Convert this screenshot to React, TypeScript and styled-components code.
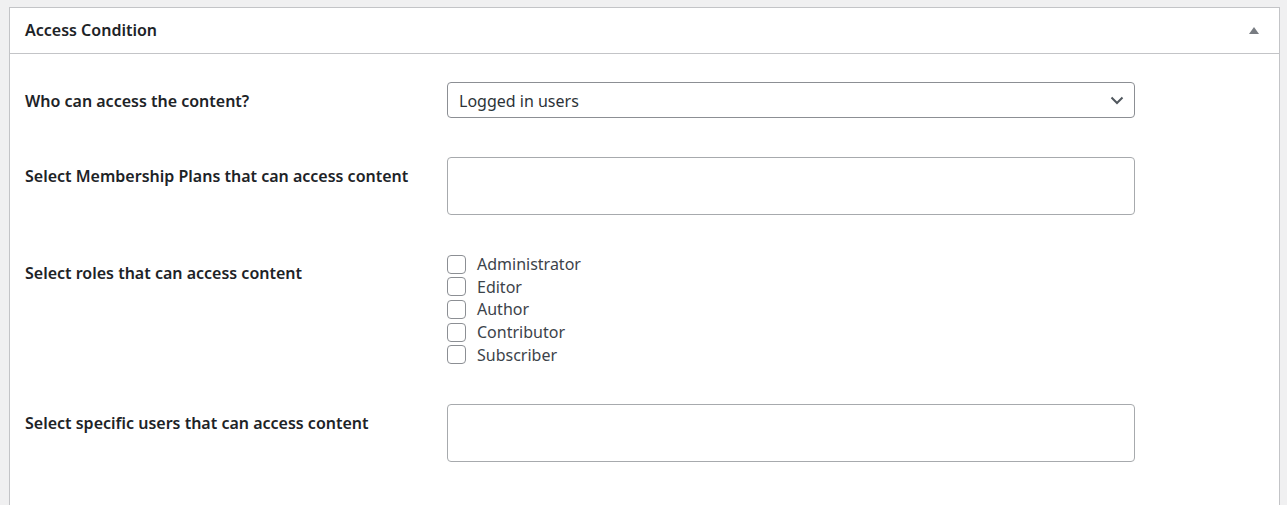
import React from 'react';
import styled, { createGlobalStyle } from 'styled-components';

const GlobalStyle = createGlobalStyle`
  html, body {
    margin: 0;
    padding: 0;
    background: #f0f0f1;
  }
  body {
    padding: 7px 7px 0 9px;
    font-family: "Noto Sans", "Open Sans", sans-serif;
    color: #1d2327;
  }
`;

// Postbox panel
const Panel = styled.div`
  background: #fff;
  border: 1px solid #c3c4c7;
  min-height: 540px;
`;

const Header = styled.div`
  display: flex;
  align-items: center;
  justify-content: space-between;
  height: 45px;
  padding: 0 20px 0 15px;
  border-bottom: 1px solid #c3c4c7;
`;

const Title = styled.h2`
  margin: 0;
  font-size: 16px;
  font-weight: 600;
  line-height: 1.4;
  color: #1d2327;
`;

const Toggle = styled.span`
  width: 0;
  height: 0;
  border-left: 5px solid transparent;
  border-right: 5px solid transparent;
  border-bottom: 7px solid #787c82;
  margin-top: -1px;
`;

const Body = styled.div`
  display: flex;
  flex-direction: column;
  gap: 39px;
  padding: 28px 15px 40px;
`;

const Row = styled.div`
  display: flex;
  align-items: flex-start;
`;

const Label = styled.div`
  width: 422px;
  flex-shrink: 0;
  padding-top: 9px;
  font-size: 16px;
  font-weight: 600;
  line-height: 20px;
  color: #1d2327;
`;

const SelectBox = styled.div`
  box-sizing: border-box;
  width: 688px;
  height: 36px;
  display: flex;
  align-items: center;
  justify-content: space-between;
  padding: 1px 10px 0 11px;
  border: 1px solid #8c8f94;
  border-radius: 4px;
  font-size: 16px;
  color: #2c3338;
`;

const TextBox = styled.div`
  box-sizing: border-box;
  width: 688px;
  height: 58px;
  border: 1px solid #a7aaad;
  border-radius: 4px;
`;

const CheckList = styled.div`
  display: flex;
  flex-direction: column;
  margin: -1px 0 -1px;
`;

const CheckItem = styled.label`
  display: flex;
  align-items: center;
  gap: 11px;
  height: 22.6px;
  font-size: 16px;
  color: #3c434a;
`;

const Box = styled.span`
  box-sizing: border-box;
  width: 19px;
  height: 19px;
  border: 1px solid #8c8f94;
  border-radius: 4px;
  background: #fff;
`;

const roles = ['Administrator', 'Editor', 'Author', 'Contributor', 'Subscriber'];

const Chevron = () => (
  <svg width="14" height="9" viewBox="0 0 14 9" fill="none">
    <path d="M1.5 1.5 L7 7 L12.5 1.5" stroke="#50575e" strokeWidth="2" />
  </svg>
);

const App: React.FC = () => {
  return (
    <>
      <GlobalStyle />
      <Panel>
        <Header>
          <Title>Access Condition</Title>
          <Toggle />
        </Header>
        <Body>
          <Row>
            <Label>Who can access the content?</Label>
            <SelectBox>
              <span>Logged in users</span>
              <Chevron />
            </SelectBox>
          </Row>
          <Row>
            <Label>Select Membership Plans that can access content</Label>
            <TextBox />
          </Row>
          <Row>
            <Label>Select roles that can access content</Label>
            <CheckList>
              {roles.map((role) => (
                <CheckItem key={role}>
                  <Box />
                  {role}
                </CheckItem>
              ))}
            </CheckList>
          </Row>
          <Row>
            <Label>Select specific users that can access content</Label>
            <TextBox />
          </Row>
        </Body>
      </Panel>
    </>
  );
};

export default App;
